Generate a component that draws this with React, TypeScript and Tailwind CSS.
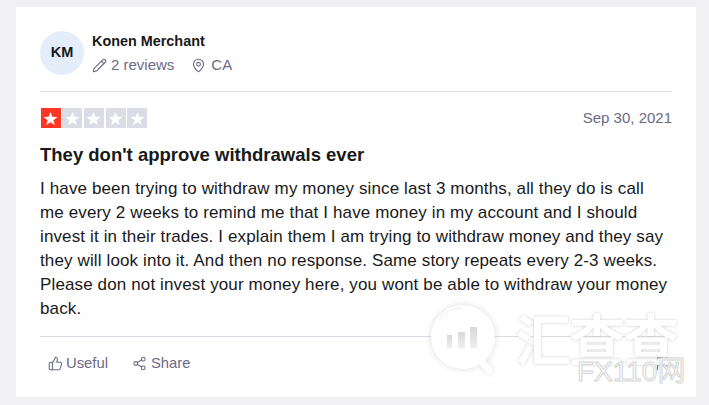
import React from "react";
import { Pencil, MapPin, ThumbsUp, Share2, Flag } from "lucide-react";

function Star({ on }: { on?: boolean }) {
  return (
    <div className={`flex h-5 w-5 items-center justify-center ${on ? "bg-[#ff3722]" : "bg-[#dcdce6]"}`}>
      <svg viewBox="0 0 24 24" className="h-[15px] w-[15px]" fill="#fff">
        <path d="M12 1.5l2.9 7.6 8.1.4-6.3 5.1 2.1 7.9L12 18.1l-6.8 4.4 2.1-7.9L1 9.5l8.1-.4z" />
      </svg>
    </div>
  );
}

export default function App() {
  return (
    <div className="relative h-[405px] w-[709px] overflow-hidden bg-[#f1f1f4] pt-[7px] pl-4 font-['Liberation_Sans',sans-serif]">
      <div className="h-[390px] w-[680px] bg-white px-6 pt-6">
        <div className="flex h-[61px] items-start border-b border-[#dcdce6]">
          <div className="flex h-11 w-11 items-center justify-center rounded-full bg-[#e3eefa] text-[14.5px] font-bold text-[#191919]">KM</div>
          <div className="ml-[8px]">
            <div className="text-[14.4px] leading-5 font-bold text-[#191919]">Konen Merchant</div>
            <div className="mt-[4px] flex items-center text-[15px] leading-5 text-[#6b6b85]">
              <Pencil size={15} strokeWidth={1.75} className="mr-[4px]" />
              <span>2 reviews</span>
              <MapPin size={15} strokeWidth={1.75} className="mr-[5px] ml-[17px]" />
              <span>CA</span>
            </div>
          </div>
        </div>
        <div className="mt-4 flex items-center justify-between">
          <div className="ml-[0.67px] flex gap-[1.67px]">
            <Star on />
            <Star />
            <Star />
            <Star />
            <Star />
          </div>
          <div className="text-[15px] leading-5 text-[#6b6b85]">Sep 30, 2021</div>
        </div>
        <h2 className="mt-[15px] text-[18.5px] leading-6 font-bold text-[#191919]">They don't approve withdrawals ever</h2>
        <p className="mt-[10px] w-[632px] text-[17px] leading-6 tracking-[0.13px] text-[#191919]">
          I have been trying to withdraw my money since last 3 months, all they do is call me every 2 weeks to remind me that I have money in my account and I should invest it in their trades. I explain them I am trying to withdraw money and they say they will look into it. And then no response. Same story repeats every 2-3 weeks. Please don not invest your money here, you wont be able to withdraw your money back.
        </p>
        <div className="mt-[15px] flex items-center border-t border-[#dcdce6] pt-[16px] pl-2 text-[14.8px] leading-5 text-[#6b6b85]">
          <ThumbsUp size={15} strokeWidth={1.75} className="mr-[3px]" />
          <span>Useful</span>
          <Share2 size={15} strokeWidth={1.75} className="mr-[4px] ml-6" />
          <span>Share</span>
          <Flag size={15} strokeWidth={1.75} className="mr-[2px] ml-auto" />
        </div>
      </div>
      <div className="absolute top-[303px] left-[429px]">
        <svg width="76" height="80" viewBox="0 0 76 80" style={{ filter: "drop-shadow(0 0 3px rgba(0,0,0,0.14))" }}>
          <defs>
            <linearGradient id="bar" x1="0" y1="0" x2="0" y2="1">
              <stop offset="0" stopColor="#d8d8da" />
              <stop offset="1" stopColor="#efeff0" />
            </linearGradient>
          </defs>
          <circle cx="34" cy="34" r="32" fill="#fff" />
          <path d="M52 58l8 9" stroke="#fff" strokeWidth="7" strokeLinecap="round" />
          <path d="M10 16A29 29 0 0 1 34 5" stroke="#ececee" strokeWidth="1" fill="none" />
          <g fill="url(#bar)">
            <rect x="18" y="32" width="5" height="13" />
            <rect x="29" y="29" width="7" height="16" />
            <rect x="41" y="24" width="7" height="21" />
          </g>
        </svg>
      </div>
      <div className="absolute top-[310px] left-[515px] text-[56px] leading-[54px] font-bold tracking-[-2px] text-white [font-family:'Noto_Sans_CJK_SC',sans-serif] [text-shadow:0_0_3px_#c8c8c8]">汇查查</div>
      <div className="absolute top-[356px] left-[577px] text-[28px] leading-8 text-white [-webkit-text-stroke:1px_#d4d4d4] [font-family:'Liberation_Sans','Noto_Sans_CJK_SC',sans-serif]">FX110网</div>
    </div>
  );
}
